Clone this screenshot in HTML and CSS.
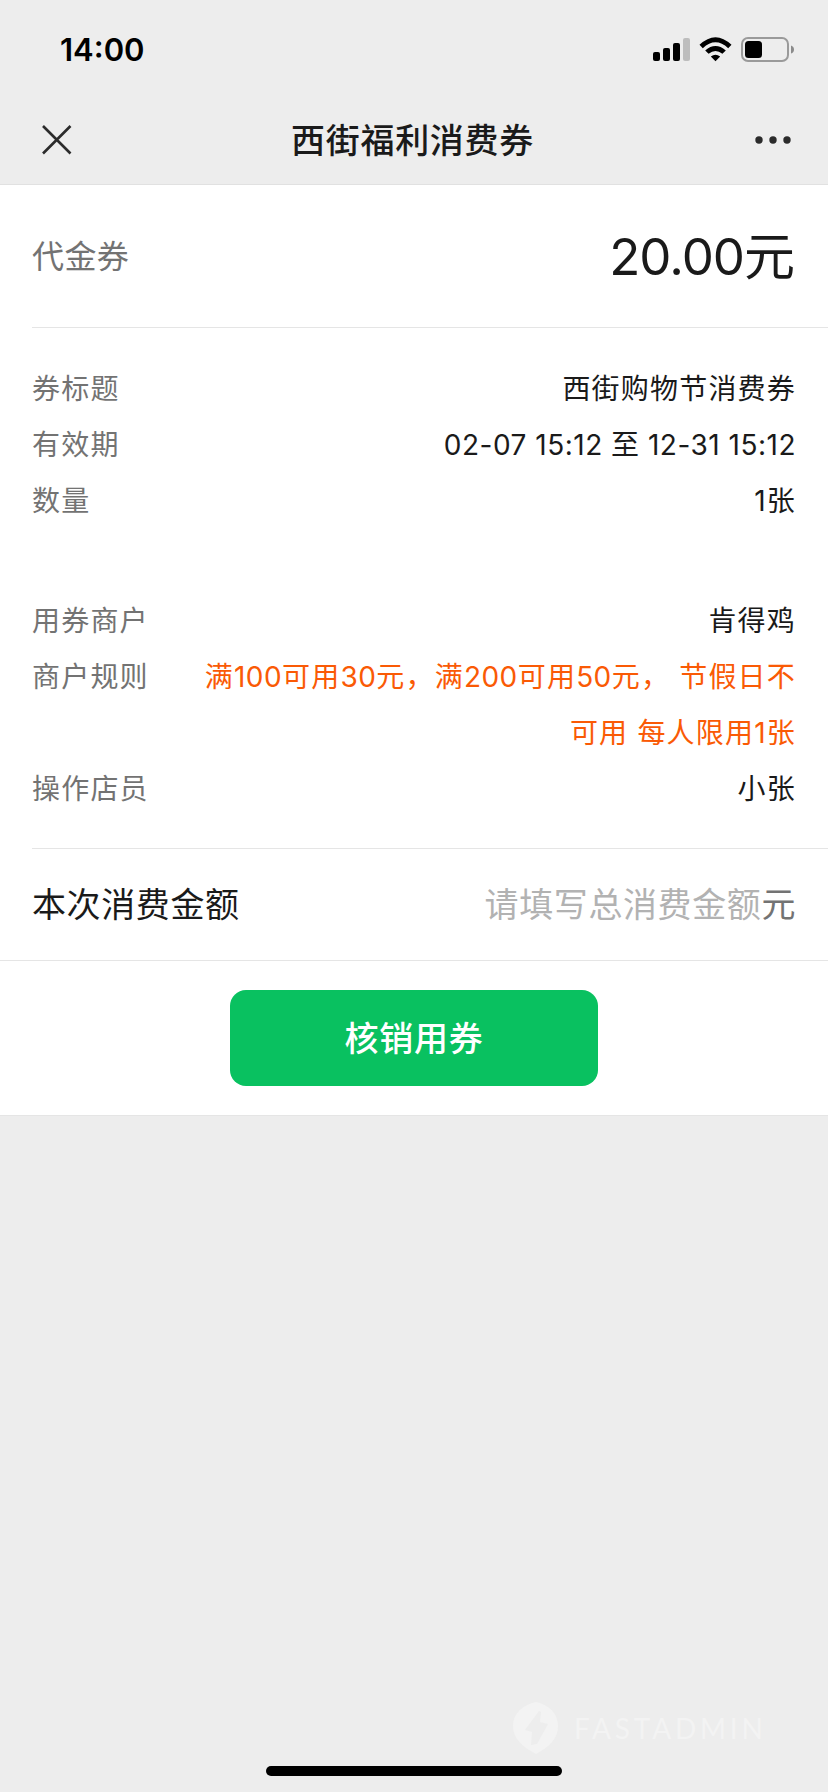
FILE: index.html
```html
<!DOCTYPE html>
<html lang="zh-CN">
<head>
<meta charset="utf-8">
<title>西街福利消费券</title>
<link rel="stylesheet" href="styles.css">
</head>
<body>
<div class="screen">
  <header class="top">
    <div class="status">
      <span class="time">14:00</span>
      <svg class="status-icons" width="144" height="28" viewBox="0 0 144 28">
        <rect x="1" y="15" width="7" height="9" rx="2"/>
        <rect x="11" y="11" width="7" height="13" rx="2"/>
        <rect x="21" y="6" width="7" height="18" rx="2"/>
        <rect x="31" y="1" width="7" height="23" rx="2" fill="#bdbdbd"/>
        <path d="M47.5 7.800 Q63.500 -7.500 79.500 7.800 L76.200 11.200 Q63.500 -.5 50.800 11.200Z M53.200 13.400 Q63.500 4.500 73.800 13.400 L70.400 16.800 Q63.500 11 56.600 16.800Z M58.800 19.400 Q63.500 16 68.200 19.400 L63.500 24.200Z"/>
        <rect x="90" y="1" width="46" height="23" rx="6" fill="none" stroke="#9a9a9a" stroke-width="2"/>
        <rect x="93" y="4" width="17" height="17" rx="3.500"/>
        <path d="M139 8.500 Q142 9.500 142 12.500 Q142 15.500 139 16.500Z" fill="#8b8b8b"/>
      </svg>
    </div>
    <nav class="nav">
      <svg class="close" width="30" height="30" viewBox="0 0 30 30"><path d="M1 1 L28.500 28.500 M28.500 1 L1 28.500" stroke="#2b2b2b" stroke-width="2.600" fill="none"/></svg>
      <h1 class="title">西街福利消费券</h1>
      <svg class="more" width="36" height="8" viewBox="0 0 36 8" fill="#2b2b2b"><circle cx="4" cy="4" r="3.700"/><circle cx="18" cy="4" r="3.700"/><circle cx="32" cy="4" r="3.700"/></svg>
    </nav>
  </header>
  <main class="card">
    <section class="face">
      <span class="face-label">代金券</span>
      <span class="face-value"><span class="number">20.00</span>元</span>
    </section>
    <section class="details">
      <dl class="group">
        <div class="row"><dt>券标题</dt><dd>西街购物节消费券</dd></div>
        <div class="row"><dt>有效期</dt><dd class="date">02-07 15:12 至 12-31 15:12</dd></div>
        <div class="row"><dt>数量</dt><dd>1张</dd></div>
      </dl>
      <dl class="group">
        <div class="row"><dt>用券商户</dt><dd>肯得鸡</dd></div>
        <div class="row"><dt>商户规则</dt><dd class="rule">满<span class="digits">100</span>可用<span class="digits">30</span>元，满<span class="digits">200</span>可用<span class="digits">50</span>元， 节假日不<br>可用 每人限用1张</dd></div>
        <div class="row"><dt>操作店员</dt><dd>小张</dd></div>
      </dl>
    </section>
    <section class="amount">
      <label class="amount-label" for="total">本次消费金额</label>
      <input class="amount-input" id="total" placeholder="请填写总消费金额">
      <span class="unit">元</span>
    </section>
    <section class="action"><button class="submit">核销用券</button></section>
  </main>
  <div class="watermark">
    <svg width="46" height="52" viewBox="0 0 46 52"><path fill="#f3f3f3" fill-rule="evenodd" d="M23 0 C36 3 45 11 45 24 C45 37 36 45 23 52 C10 45 0 37 0 24 C0 11 10 3 23 0Z M26 9 L12 28 L19 30 L18 43 L24 42 L35 22 L27 20 L28 10Z"/></svg>
    <span class="watermark-text">FASTADMIN</span>
  </div>
  <div class="home-bar"></div>
</div>
</body>
</html>
```
FILE: styles.css
```css
* { box-sizing: border-box; }
body {
  margin: 0;
  background: #ededed;
  color: #1a1a1a;
  font-family: Inter, "Noto Sans CJK SC", sans-serif;
}
.screen { position: relative; width: 828px; height: 1792px; overflow: hidden; }
.top { height: 185px; border-bottom: 1px solid #e1e1e1; }
.status {
  height: 100px;
  padding: 0 34px 0 60px;
  display: flex;
  align-items: center;
  justify-content: space-between;
}
.time { color: #000; font-size: 31px; font-weight: 600; line-height: 40px; }
.status-icons { margin-top: 2px; margin-right: -2px; }
.nav {
  height: 80px;
  padding: 0 45px 0 42px;
  display: grid;
  grid-template-columns: 1fr auto 1fr;
  align-items: center;
}
.more { justify-self: end; margin-right: -8px; }
.title { margin: 0; padding-top: 2px; font-size: 34px; line-height: 50px; font-weight: 500; letter-spacing: .7px; }
.card { background: #fff; border-bottom: 1px solid #e5e5e5; }
.face {
  height: 143px;
  margin-left: 32px;
  padding-right: 33px;
  display: flex;
  align-items: center;
  justify-content: space-between;
  border-bottom: 1px solid #e5e5e5;
}
.face-label { padding-bottom: 4px; color: #737373; font-size: 32px; letter-spacing: .4px; }
.face-value { padding-top: 2px; font-size: 51px; line-height: 70px; }
.number { font-size: 51px; letter-spacing: -1px; }
.details {
  margin-left: 32px;
  padding: 33px 32px 31px 0;
  display: flex;
  flex-direction: column;
  gap: 64px;
  border-bottom: 1px solid #e5e5e5;
}
.group { margin: 0; font-size: 28px; line-height: 56px; letter-spacing: 1.2px; }
.row { display: flex; justify-content: space-between; }
.row dt { color: #737373; }
.row dd { margin: 0; text-align: right; white-space: nowrap; }
.row .rule { color: #fa5a05; }
.row .date { letter-spacing: .5px; }
.digits { letter-spacing: .45px; }
.amount {
  height: 112px;
  padding: 0 32px;
  display: flex;
  align-items: center;
  font-size: 34px;
  letter-spacing: .6px;
  border-bottom: 1px solid #e5e5e5;
}
.amount-label, .unit { padding-bottom: 4px; }
.amount-input {
  flex: 1;
  min-width: 0;
  height: 60px;
  padding: 0;
  border: 0;
  outline: 0;
  background: none;
  font: inherit;
  letter-spacing: inherit;
  text-align: right;
}
.amount-input::placeholder { color: #b2b2b2; opacity: 1; }
.unit { color: #737373; }
.action { padding: 29px 0; display: flex; justify-content: center; }
.submit {
  width: 368px;
  height: 96px;
  padding: 2px 0 0;
  border: 0;
  border-radius: 16px;
  background: #09c160;
  color: #fff;
  font: 500 34px/48px Inter, "Noto Sans CJK SC", sans-serif;
  letter-spacing: .7px;
}
.watermark {
  position: absolute;
  left: 513px;
  top: 1702px;
  display: flex;
  align-items: center;
  gap: 15px;
}
.watermark-text { color: #f3f3f3; font: 400 28px/40px Lato, sans-serif; letter-spacing: 3.8px; }
.home-bar {
  position: absolute;
  left: 266px;
  top: 1766px;
  width: 296px;
  height: 10px;
  border-radius: 5px;
  background: #000;
}
```
